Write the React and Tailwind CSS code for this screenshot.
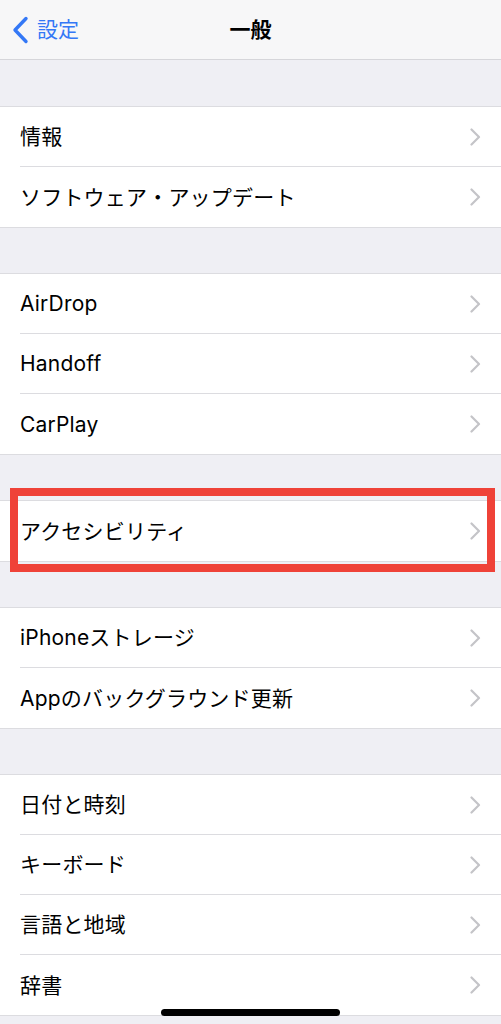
import React from "react";

const font = { fontFamily: '"Inter","Noto Sans CJK JP",sans-serif' };

function Chevron() {
  return (
    <svg width="11" height="18" viewBox="0 0 11 18" className="shrink-0">
      <path d="M1.5 1.5 L9 9 L1.5 16.5" fill="none" stroke="#c4c4c8" strokeWidth="2.2" strokeLinecap="round" strokeLinejoin="round" />
    </svg>
  );
}

function Row({ label, last }) {
  return (
    <div className="h-[60px] flex items-center pl-[20px]">
      <div className={`h-full flex-1 flex items-center pr-[20px] ${last ? "" : "border-b border-[#dcdce0]"}`}>
        <span className="flex-1 text-[21px] text-black leading-none tracking-[0.2px]">{label}</span>
        <Chevron />
      </div>
    </div>
  );
}

function Group({ items }) {
  return (
    <div className="bg-white border-y border-[#dcdce0]">
      {items.map((l, i) => (
        <Row key={l} label={l} last={i === items.length - 1} />
      ))}
    </div>
  );
}

export default function App() {
  return (
    <div className="w-[501px] h-[1024px] bg-[#efeff4] overflow-hidden relative" style={font}>
      <div className="h-[60px] bg-[#f7f7f8] border-b border-[#d6d6da] relative flex items-center">
        <div className="flex items-center pl-[12px] gap-[8px]">
          <svg width="17" height="28" viewBox="0 0 17 28">
            <path d="M14 2.5 L3 14 L14 25.5" fill="none" stroke="#3478f6" strokeWidth="3.4" strokeLinecap="round" strokeLinejoin="round" />
          </svg>
          <span className="text-[21px] text-[#3478f6] leading-none">設定</span>
        </div>
        <div className="absolute inset-0 flex items-center justify-center pointer-events-none">
          <span className="text-[21px] font-bold text-black leading-none">一般</span>
        </div>
      </div>
      <div className="h-[46px]" />
      <Group items={["情報", "ソフトウェア・アップデート"]} />
      <div className="h-[45px]" />
      <Group items={["AirDrop", "Handoff", "CarPlay"]} />
      <div className="h-[45px]" />
      <Group items={["アクセシビリティ"]} />
      <div className="h-[45px]" />
      <Group items={["iPhoneストレージ", "Appのバックグラウンド更新"]} />
      <div className="h-[45px]" />
      <Group items={["日付と時刻", "キーボード", "言語と地域", "辞書"]} />

      <div className="absolute left-[10px] top-[488px] w-[485px] h-[84px] border-[8px] border-[#ef4238]" />
      <div className="absolute left-[161px] top-[1009px] w-[179px] h-[7px] rounded-full bg-black" />
    </div>
  );
}
